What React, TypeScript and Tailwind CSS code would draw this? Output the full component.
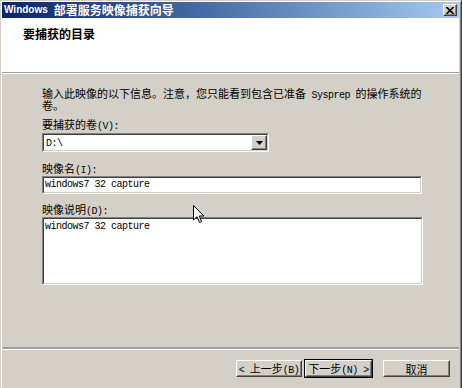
import React from "react";

function Mono({ children }: { children: React.ReactNode }) {
  return (
    <span className="font-['Liberation_Mono',monospace] text-[10px] leading-[10px] tracking-[-0.5px]">{children}</span>
  );
}

function Sunken({ className, children }: { className?: string; children?: React.ReactNode }) {
  return (
    <div className={"border border-t-[#808080] border-l-[#808080] border-r-white border-b-white " + (className ?? "")}>
      <div className="h-full w-full border border-t-[#404040] border-l-[#404040] border-r-[#d4d0c8] border-b-[#d4d0c8] bg-white">
        {children}
      </div>
    </div>
  );
}

function Raised({ className, children }: { className?: string; children?: React.ReactNode }) {
  return (
    <div className={"border border-t-white border-l-white border-r-[#404040] border-b-[#404040] bg-[#d4d0c8] " + (className ?? "")}>
      <div className="flex h-full w-full items-center justify-center border border-t-[#d4d0c8] border-l-[#d4d0c8] border-r-[#808080] border-b-[#808080]">
        {children}
      </div>
    </div>
  );
}

function Line({ className, children }: { className?: string; children: React.ReactNode }) {
  return <div className={"h-[12px] whitespace-nowrap leading-[12px] " + (className ?? "")}>{children}</div>;
}

export default function App() {
  return (
    <div className="relative h-[388px] w-[462px] overflow-hidden bg-[#d4d0c8] font-['Noto_Sans_CJK_SC','Noto_Sans',sans-serif] text-[11px] text-black">
      <div className="flex h-full flex-col border-t border-l border-r border-t-[#d4d0c8] border-l-[#d4d0c8] border-r-[#404040]">
        <div className="flex flex-1 flex-col border-t border-l border-r border-t-white border-l-white border-r-[#808080] pr-px">
          {/* title bar */}
          <div className="flex h-[16px] items-center bg-linear-to-r from-[#0a246a] to-[#a6caf0] pl-[2px] pr-[2px] text-white">
            <span className="font-['Liberation_Sans',sans-serif] text-[10px] font-bold leading-none">Windows</span>
            <span className="ml-[6px] text-[12px] font-bold leading-none">部署服务映像捕获向导</span>
            <div className="ml-auto">
              <Raised className="h-[12px] w-[14px]">
                <svg width="8" height="7" viewBox="0 0 8 7">
                  <path d="M0.5 0 L7.5 7 M7.5 0 L0.5 7" stroke="#000" strokeWidth="1.6" />
                </svg>
              </Raised>
            </div>
          </div>
          {/* header */}
          <div className="h-[54px] bg-white pl-[21px] pt-[10px]">
            <div className="h-[12px] text-[12px] font-bold leading-[12px]">要捕获的目录</div>
          </div>
          <div className="h-px bg-[#a0a0a0]" />
          <div className="h-px bg-white" />
          {/* body */}
          <div className="h-[273px] pl-[40px] pt-[13px]">
            <Line>
              输入此映像的以下信息。注意，您只能看到包含已准备<Mono>&nbsp;Sysprep&nbsp;</Mono>的操作系统的
            </Line>
            <Line>卷。</Line>
            <Line className="mt-[7px]">
              要捕获的卷<Mono>(V):</Mono>
            </Line>
            <Sunken className="mt-[3px] h-[19px] w-[227px]">
              <div className="flex h-full items-center">
                <span className="pl-[2px] leading-[10px]"><Mono>D:\</Mono></span>
                <div className="ml-auto h-full">
                  <Raised className="h-full w-[16px]">
                    <svg width="7" height="4" viewBox="0 0 7 4">
                      <path d="M0 0 H7 L3.5 4 Z" fill="#000" />
                    </svg>
                  </Raised>
                </div>
              </div>
            </Sunken>
            <Line className="mt-[10px]">
              映像名<Mono>(I):</Mono>
            </Line>
            <Sunken className="mt-[2px] h-[18px] w-[380px]">
              <div className="flex h-full items-center pl-[1px]">
                <Mono>windows7 32 capture</Mono>
              </div>
            </Sunken>
            <Line className="mt-[9px]">
              映像说明<Mono>(D):</Mono>
            </Line>
            <Sunken className="mt-[2px] h-[68px] w-[381px]">
              <div className="flex h-[14px] items-center pl-[1px] pt-[2px]">
                <Mono>windows7 32 capture</Mono>
              </div>
            </Sunken>
          </div>
          {/* separator */}
          <div className="ml-px h-[2px] bg-[#a0a0a0]" />
          <div className="ml-px h-px bg-white" />
          {/* buttons */}
          <div className="mt-[9px] flex pr-[8px]">
            <div className="ml-auto flex">
              <div className="border border-transparent">
                <Raised className="h-[17px] w-[66px]">
                  <span className="leading-[12px]">
                    <Mono>&lt;&nbsp;</Mono>上一步<Mono>(B)</Mono>
                  </span>
                </Raised>
              </div>
              <div className="ml-px border border-black">
                <Raised className="h-[17px] w-[67px]">
                  <span className="leading-[12px]">
                    下一步<Mono>(N)&nbsp;&gt;</Mono>
                  </span>
                </Raised>
              </div>
              <div className="ml-[9px] border border-transparent">
                <Raised className="h-[17px] w-[67px]">
                  <span className="leading-[12px]">取消</span>
                </Raised>
              </div>
            </div>
          </div>
        </div>
      </div>
      {/* mouse cursor */}
      <svg className="absolute left-[193px] top-[205px]" width="12" height="19" viewBox="0 0 12 19">
        <path d="M0.5 0.5 L0.5 15 L4 11.7 L6.5 17.5 L8.6 16.6 L6.2 11 L10.8 11 Z" fill="#fff" stroke="#000" strokeWidth="1" />
      </svg>
    </div>
  );
}
